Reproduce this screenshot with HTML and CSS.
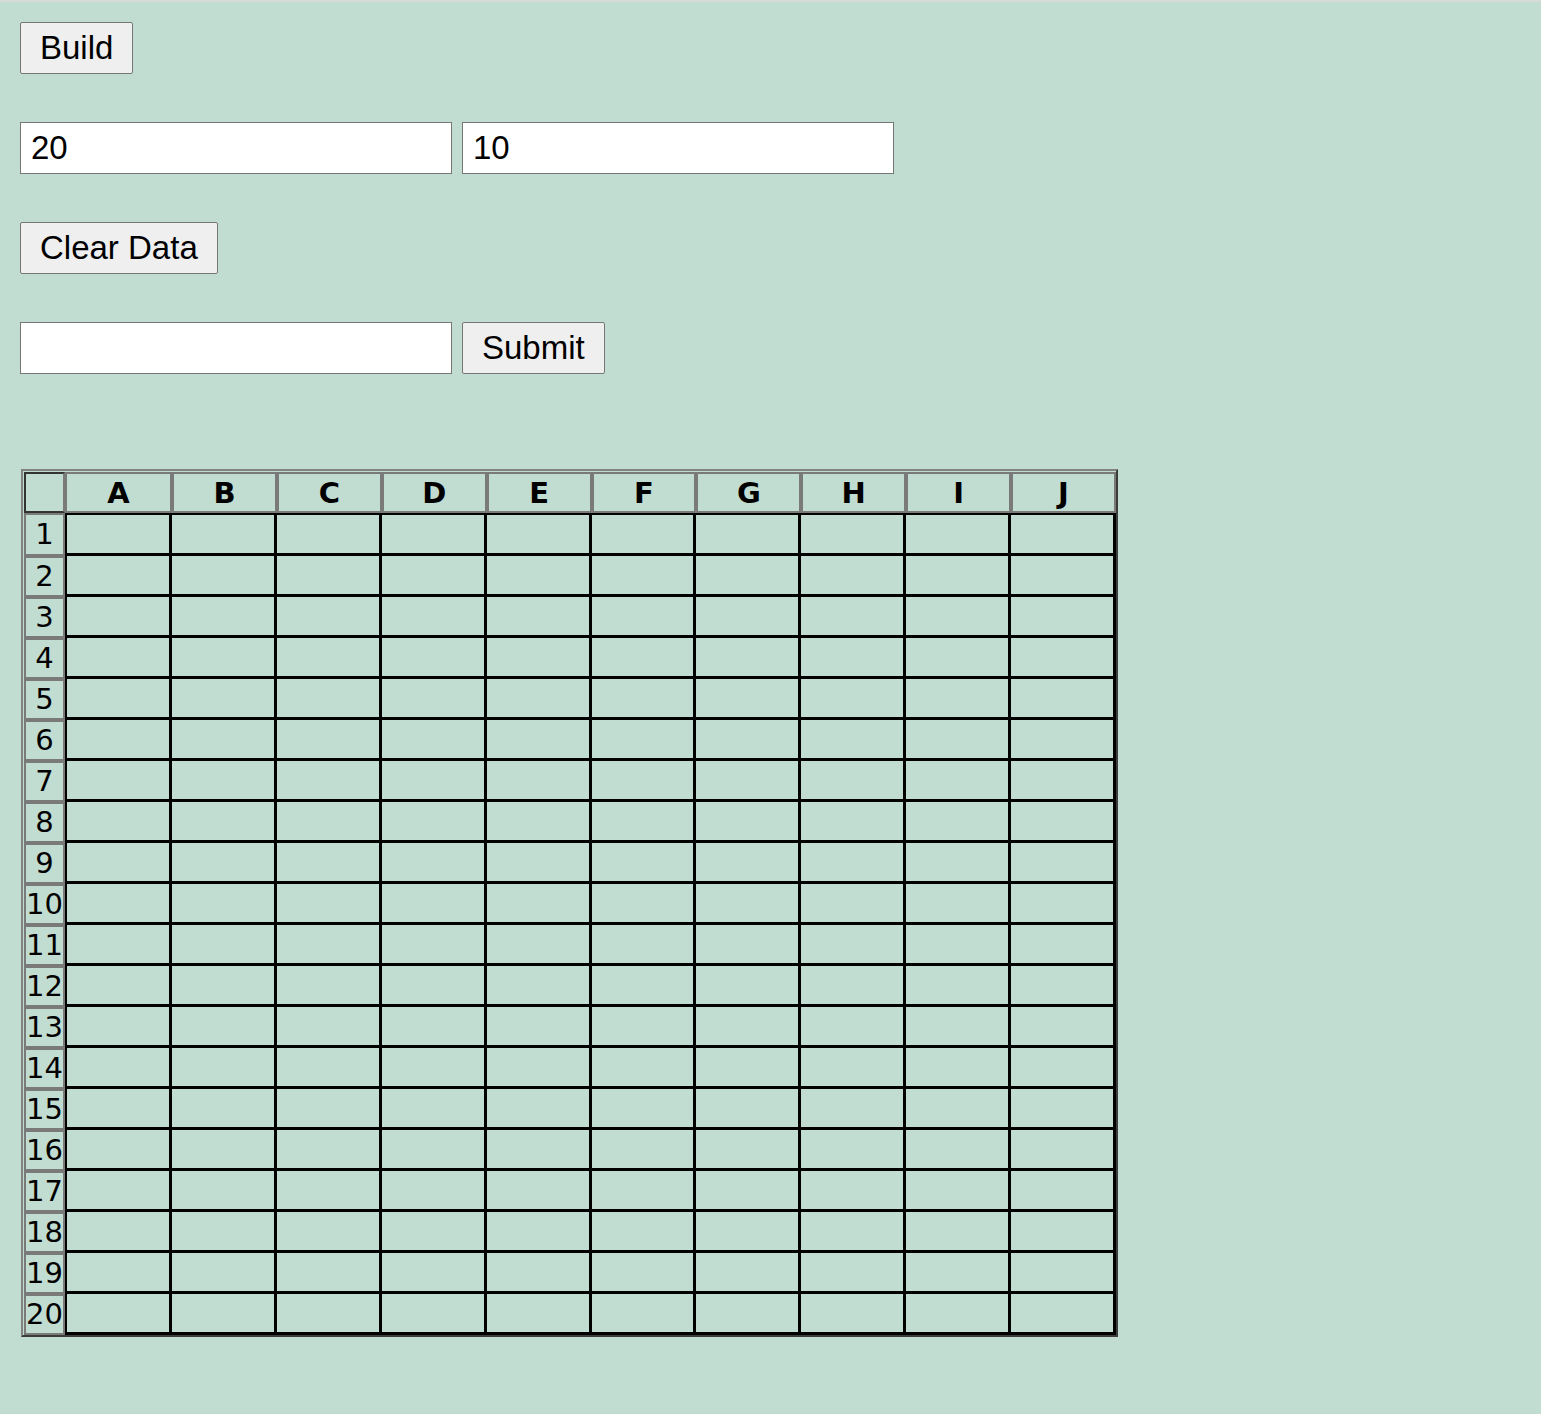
FILE: index.html
```html
<!DOCTYPE html>
<html>
<head>
<meta charset="utf-8">
<title>Sheet</title>
<link rel="stylesheet" href="styles.css">
</head>
<body>
<div class="page">
  <div class="row"><button class="btn">Build</button></div>
  <div class="row"><input class="field" type="text" value="20"><input class="field" type="text" value="10"></div>
  <div class="row"><button class="btn">Clear Data</button></div>
  <div class="row"><input class="field" type="text" value=""><button class="btn">Submit</button></div>
  <table class="sheet" id="sheet">
    <colgroup><col class="c-idx"><col class="c-a"><col><col><col><col><col><col><col><col><col></colgroup>
    <thead>
      <tr class="hrow"><th class="corner"></th><th>A</th><th>B</th><th>C</th><th>D</th><th>E</th><th>F</th><th>G</th><th>H</th><th>I</th><th>J</th></tr>
    </thead>
    <tbody id="body"></tbody>
  </table>
</div>
<script>
  var tb = document.getElementById('body');
  var html = '';
  for (var r = 1; r <= 20; r++) {
    html += '<tr class="drow' + (r === 1 ? ' first' : '') + '"><th class="rh">' + r + '</th>';
    for (var c = 0; c < 10; c++) html += '<td class="cell' + (c === 0 ? ' c0' : '') + '"></td>';
    html += '</tr>';
  }
  tb.innerHTML = html;
</script>
</body>
</html>
```

FILE: styles.css
```css
html, body {
  margin: 0;
  padding: 0;
}
body {
  background: #c1dcd0;
  border-top: 2px solid #d6dbd9;
  min-height: 1412px;
}
.page {
  padding: 20px 0 0 20px;
  display: flex;
  flex-direction: column;
  align-items: flex-start;
  gap: 48px;
}
.row {
  display: flex;
  gap: 10px;
  height: 52px;
}
.btn {
  box-sizing: border-box;
  height: 52px;
  padding: 0 19px;
  font-family: "Liberation Sans", Arial, sans-serif;
  font-size: 33px;
  color: #000;
  background: #efefef;
  border: 1px solid #767676;
  border-radius: 2px;
}
.field {
  box-sizing: border-box;
  width: 432px;
  height: 52px;
  padding: 0 10px;
  margin: 0;
  font-family: "Liberation Sans", Arial, sans-serif;
  font-size: 33px;
  color: #000;
  background: #fff;
  border: 1px solid #767676;
  border-radius: 0;
}
.sheet {
  margin-top: 47px;
  margin-left: 1px;
  width: 1097px;
  table-layout: fixed;
  border-collapse: separate;
  border-spacing: 0;
  border: 2px solid;
  border-color: #828282 #3c3c3c #3c3c3c #828282;
  padding: 1px 0 0 1px;
  font-family: "DejaVu Sans", Verdana, sans-serif;
  font-size: 29px;
  color: #000;
}
.c-idx { width: 41px; }
.c-a { width: 107px; }
.sheet th, .sheet td {
  padding: 0;
  text-align: center;
  vertical-align: middle;
  line-height: 1;
}
.hrow { height: 41px; }
.hrow th {
  font-weight: bold;
  border: 2px solid #7a7a7a;
  padding-top: 2px;
}
.hrow th.corner {
  border-color: #333 #7a7a7a #333 #333;
}
.drow { height: 41px; }
.drow.first { height: 43px; }
.rh {
  font-weight: normal;
  border: 2px solid #7a7a7a;
  padding-top: 2px;
}
.cell {
  border-right: 3px solid #000;
  border-bottom: 3px solid #000;
}
.cell.c0 {
  border-left: 2px solid #000;
}
.drow.first .cell {
  border-top: 2px solid #000;
}
```
